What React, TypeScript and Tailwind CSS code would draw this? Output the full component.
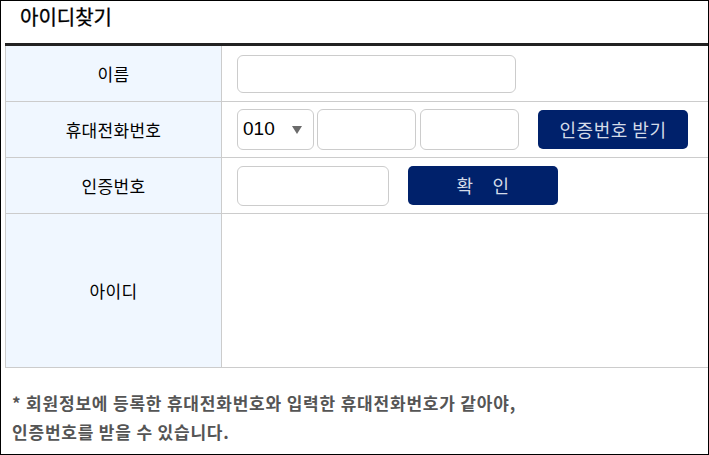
const kr = "font-['Noto_Sans_CJK_KR','Noto_Sans',sans-serif]";

function Label({ text, tall }: { text: string; tall?: boolean }) {
  return (
    <div
      className={`flex items-center justify-center border-r border-b border-[#cccccc] bg-[#f0f7ff] text-[17px] tracking-[0.3px] text-black ${
        tall ? 'h-[154px]' : 'h-[56px]'
      }`}
    >
      {text}
    </div>
  );
}

function Field({ children, tall }: { children?: React.ReactNode; tall?: boolean }) {
  return (
    <div
      className={`flex items-center border-b border-[#cccccc] pl-[15px] ${tall ? 'h-[154px]' : 'h-[56px]'}`}
    >
      {children}
    </div>
  );
}

const inputCls =
  'rounded-[6px] border border-[#cccccc] bg-white outline-none';
const btnCls =
  'flex items-center justify-center rounded-[5px] bg-[#00216b] text-[18px] tracking-[0.5px] text-[#d4dbe8]';

export default function App() {
  return (
    <div className={`${kr} h-[455px] w-[709px] border border-black bg-white`}>
      <div className="h-[42px] pl-[19px] pt-[1px] text-[20px] leading-[30px] text-black [-webkit-text-stroke:0.3px_black]">
        아이디찾기
      </div>

      <div className="ml-[4px] border-t-[3px] border-[#222222]">
        <div className="grid grid-cols-[216px_1fr] border-l border-[#cccccc]">
          <Label text="이름" />
          <Field>
            <input className={`${inputCls} h-[38px] w-[279px]`} />
          </Field>

          <Label text="휴대전화번호" />
          <Field>
            <div className={`${inputCls} flex h-[41px] w-[77px] items-center justify-between pl-[5px] pr-[11px]`}>
              <span className="font-['Liberation_Sans',sans-serif] text-[19px] text-black">010</span>
              <svg width="10" height="8" viewBox="0 0 10 8">
                <path d="M0 0 L10 0 L5 8 Z" fill="#6b6b6b" />
              </svg>
            </div>
            <input className={`${inputCls} ml-[3px] h-[41px] w-[99px]`} />
            <input className={`${inputCls} ml-[4px] h-[41px] w-[99px]`} />
            <button className={`${btnCls} ml-[19px] h-[39px] w-[150px]`}>인증번호 받기</button>
          </Field>

          <Label text="인증번호" />
          <Field>
            <input className={`${inputCls} h-[40px] w-[152px]`} />
            <button className={`${btnCls} ml-[19px] h-[39px] w-[150px] gap-[19px]`}>
              <span>확</span>
              <span>인</span>
            </button>
          </Field>

          <Label text="아이디" tall />
          <Field tall />
        </div>
      </div>

      <div className="pl-[11px] pt-[20px] text-[17px] font-bold leading-[29px] tracking-[0.8px] text-[#555555]">
        <p>* 회원정보에 등록한 휴대전화번호와 입력한 휴대전화번호가 같아야,</p>
        <p>인증번호를 받을 수 있습니다.</p>
      </div>
    </div>
  );
}
